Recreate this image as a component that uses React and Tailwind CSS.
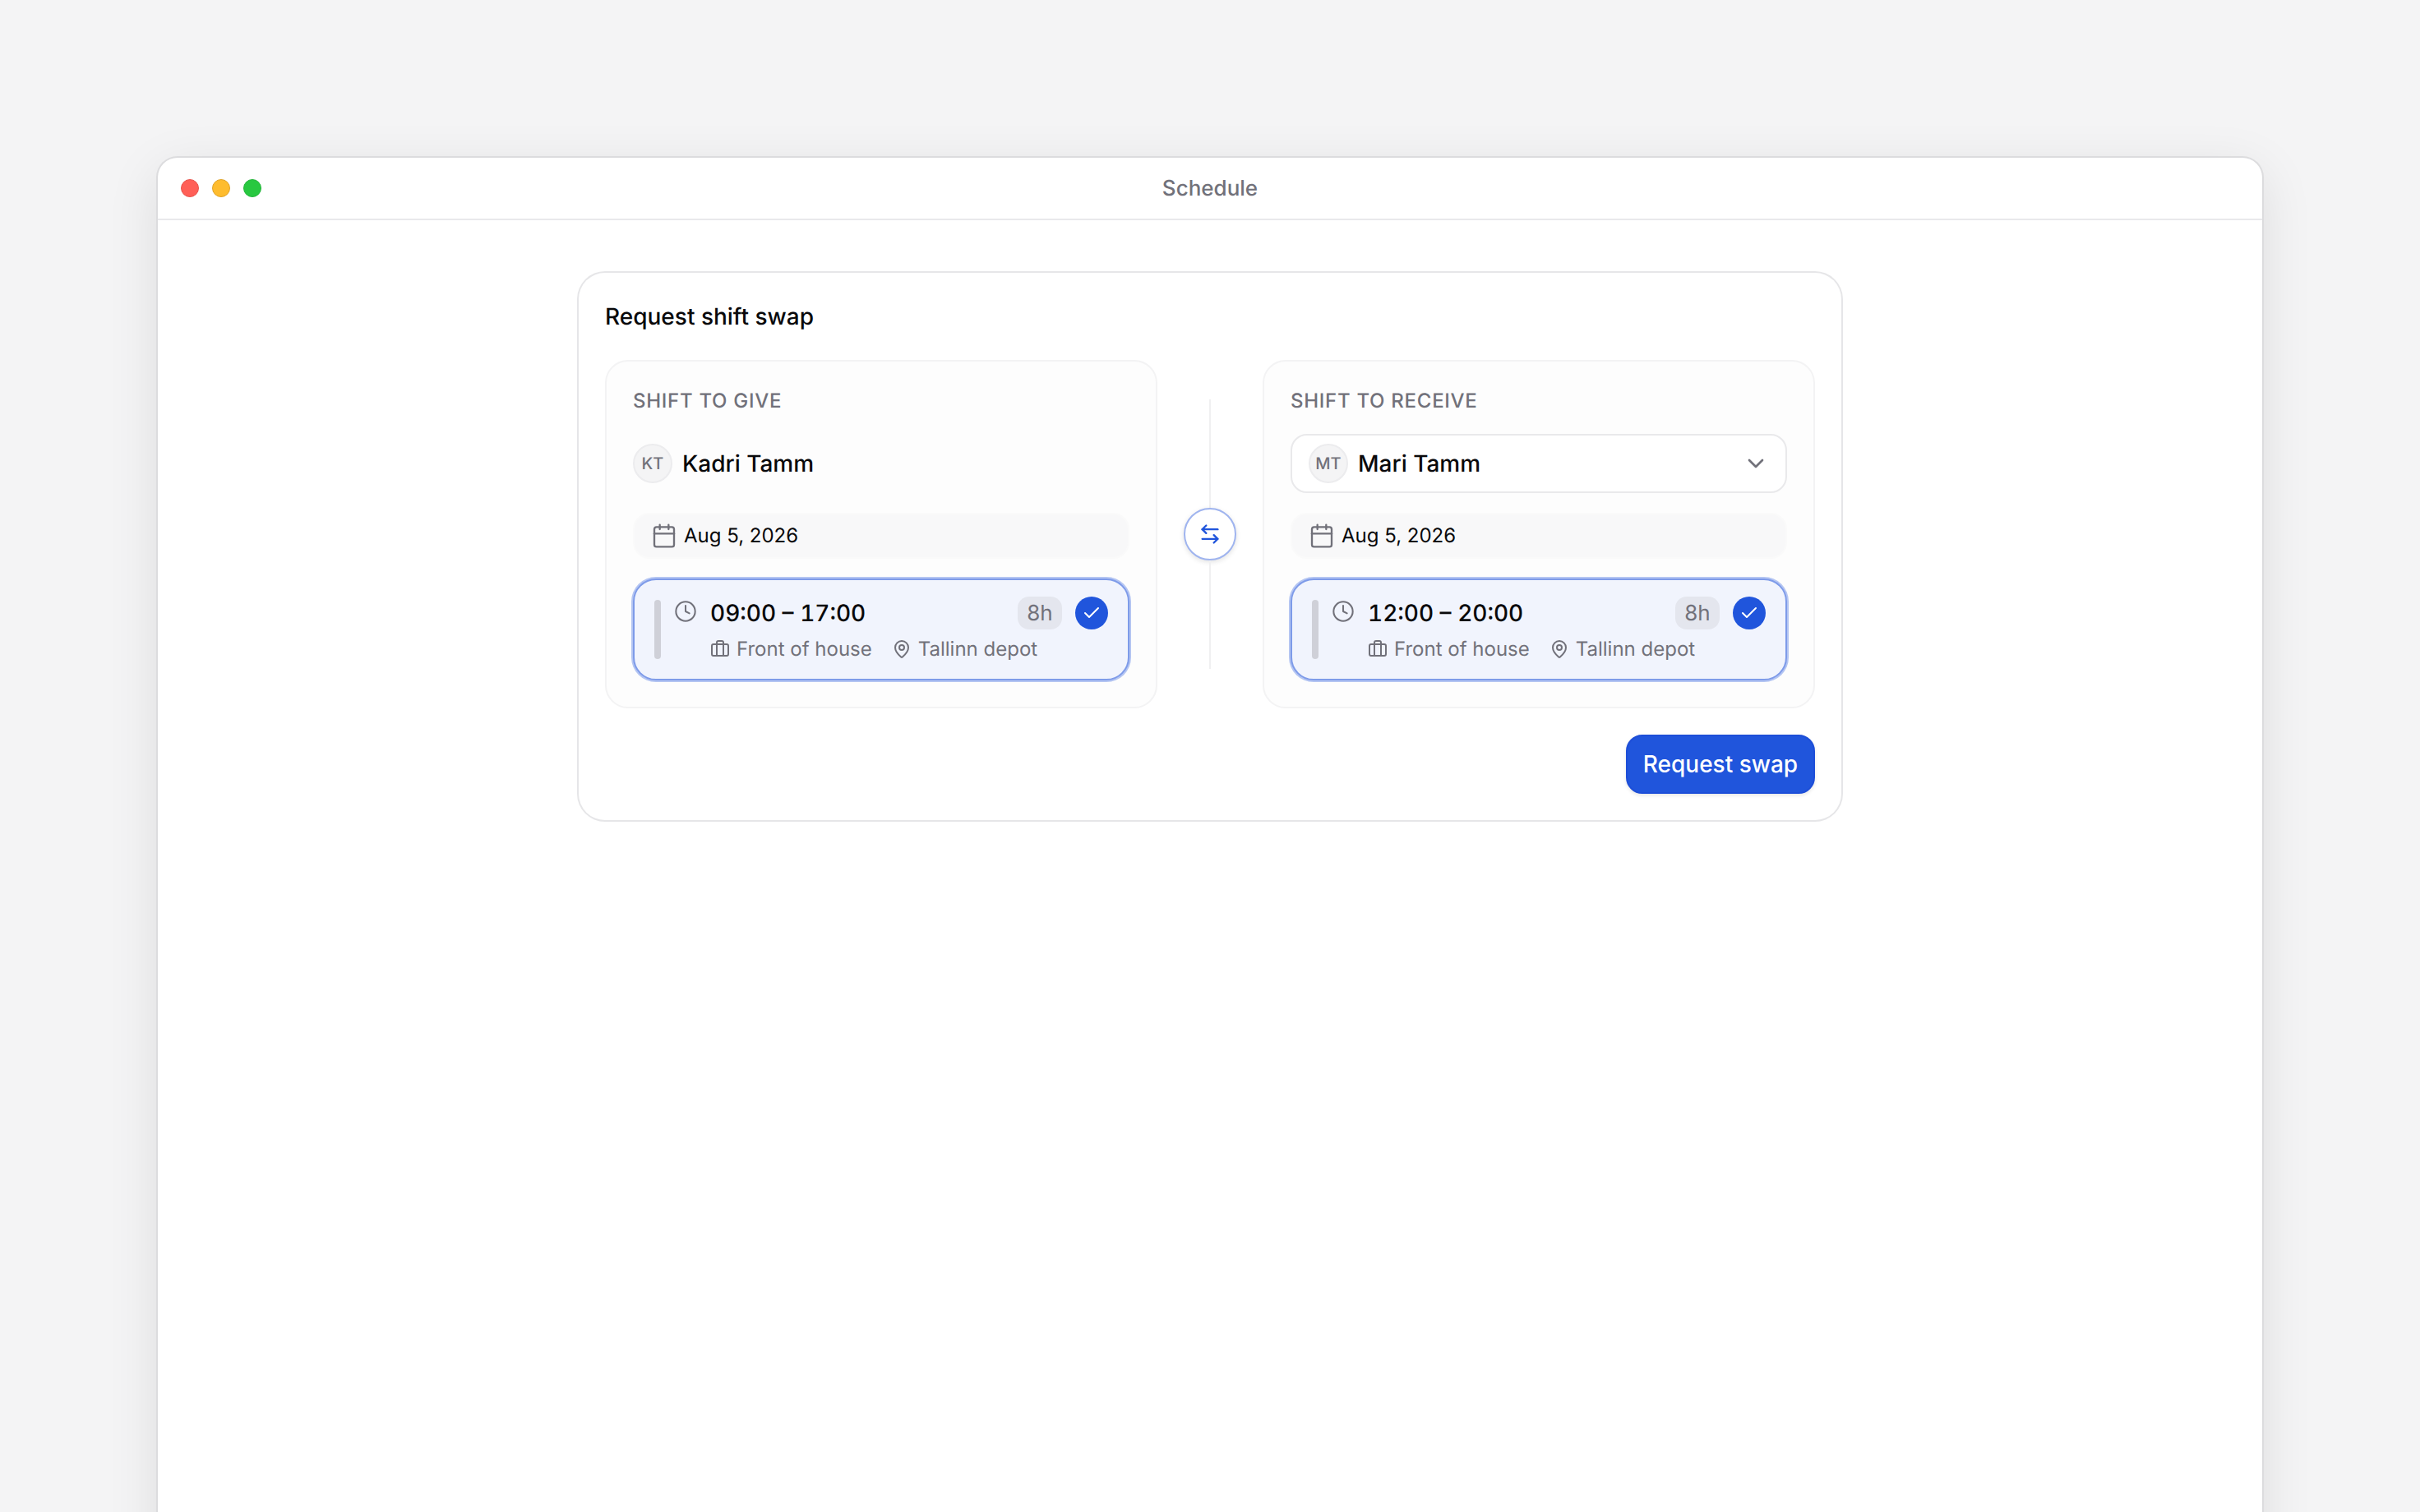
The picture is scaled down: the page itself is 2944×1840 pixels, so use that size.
import { ArrowLeftRight, Briefcase, Calendar, Check, ChevronDown, Clock, MapPin } from "lucide-react";

const Avatar = ({ initials }) => (
  <div className="w-12 h-12 shrink-0 rounded-full bg-[#f4f4f5] border-2 border-[#ececee] flex items-center justify-center text-[20px] font-medium text-[#71717a]">
    {initials}
  </div>
);

const ShiftCard = ({ time }) => (
  <div className="h-[124px] flex gap-4 px-6 py-5 rounded-[28px] bg-[#f1f4fd] border-2 border-[#7e9be9] shadow-[0_0_0_2px_#b4c5f2]">
    <div className="w-2 my-1 rounded bg-[#cfd0d8]"></div>
    <Clock size={28} strokeWidth={1.75} className="mt-1 shrink-0 text-[#71717a]" />
    <div className="flex-1 flex flex-col gap-2">
      <div className="h-10 flex items-center justify-between">
        <span className="text-[28px] font-medium tabular-nums text-[#09090b]">{time}</span>
        <div className="flex items-center gap-4">
          <span className="w-[54px] h-10 rounded-[14px] bg-[#e4e6ee] flex items-center justify-center text-[26px] text-[#71717a]">8h</span>
          <span className="w-10 h-10 rounded-full bg-[#2055dc] flex items-center justify-center text-white">
            <Check size={24} strokeWidth={2} />
          </span>
        </div>
      </div>
      <div className="h-8 flex items-center gap-6 text-[24px] text-[#71717a]">
        <span className="flex items-center gap-2">
          <Briefcase size={24} strokeWidth={2} />
          Front of house
        </span>
        <span className="flex items-center gap-2">
          <MapPin size={24} strokeWidth={2} />
          Tallinn depot
        </span>
      </div>
    </div>
  </div>
);

const Panel = ({ label, time, children }) => (
  <div className="flex-1 p-8 rounded-[28px] bg-[#fdfdfd] border-2 border-[#f3f3f4]">
    <div className="h-8 mb-6 flex items-center text-[24px] font-medium tracking-[0.72px] text-[#71717a]">{label}</div>
    {children}
    <div className="h-14 mt-6 mb-6 px-5 flex items-center gap-2 rounded-[20px] bg-[#f8f8f9] border-2 border-[#fafafa] text-[24px] text-[#09090b]">
      <Calendar size={32} strokeWidth={1.75} className="text-[#71717a]" />
      Aug 5, 2026
    </div>
    <ShiftCard time={time} />
  </div>
);

export default function App() {
  return (
    <div className="h-screen overflow-hidden bg-[#f4f4f5] pt-48 px-48 [font-family:Inter,sans-serif] [text-rendering:geometricPrecision]">
      <div className="h-[1800px] rounded-[24px] bg-white shadow-[0_0_0_2px_#dcdcde,0_16px_64px_rgba(0,0,0,0.1)]">
        <div className="h-[76px] grid grid-cols-[1fr_auto_1fr] items-center px-7 border-b-2 border-[#e9e9eb]">
          <div className="flex gap-4">
            <span className="w-[22px] h-[22px] rounded-full bg-[#ff5f57] border border-[#e8544d]"></span>
            <span className="w-[22px] h-[22px] rounded-full bg-[#febc2e] border border-[#e0a328]"></span>
            <span className="w-[22px] h-[22px] rounded-full bg-[#28c840] border border-[#24b53a]"></span>
          </div>
          <span className="text-[26px] font-medium text-[#71717a]">Schedule</span>
        </div>
        <div className="py-16">
          <div className="w-[1536px] mx-auto p-8 rounded-[32px] bg-white shadow-[0_0_0_2px_#e6e6e8]">
            <h2 className="h-[42px] mb-8 flex items-center text-[28px] font-medium text-[#09090b]">Request shift swap</h2>
            <div className="flex">
              <Panel label="SHIFT TO GIVE" time="09:00 – 17:00">
                <div className="h-[72px] flex items-center gap-3">
                  <Avatar initials="KT" />
                  <span className="text-[28px] font-medium text-[#09090b]">Kadri Tamm</span>
                </div>
              </Panel>
              <div className="w-32 py-12 flex flex-col items-center">
                <div className="flex-1 w-0.5 bg-[#f0f0f1]"></div>
                <button className="w-16 h-16 shrink-0 rounded-full bg-white border-2 border-[#9fb4ef] shadow-[0_2px_6px_rgba(0,0,0,0.12)] flex items-center justify-center text-[#2055dc]">
                  <ArrowLeftRight size={28} strokeWidth={2} />
                </button>
                <div className="flex-1 w-0.5 bg-[#f0f0f1]"></div>
              </div>
              <Panel label="SHIFT TO RECEIVE" time="12:00 – 20:00">
                <div className="h-[72px] px-5 flex items-center gap-3 rounded-[20px] bg-white border-2 border-[#e9e9eb]">
                  <Avatar initials="MT" />
                  <span className="flex-1 text-[28px] font-medium text-[#09090b]">Mari Tamm</span>
                  <ChevronDown size={32} strokeWidth={2} className="text-[#71717a]" />
                </div>
              </Panel>
            </div>
            <div className="mt-8 flex justify-end">
              <button className="w-[230px] h-[72px] rounded-[20px] bg-[#2055dc] border-2 border-[#1d4ed8] shadow-[0_2px_4px_rgba(0,0,0,0.1)] text-[28px] font-medium text-white">
                Request swap
              </button>
            </div>
          </div>
        </div>
      </div>
    </div>
  );
}
